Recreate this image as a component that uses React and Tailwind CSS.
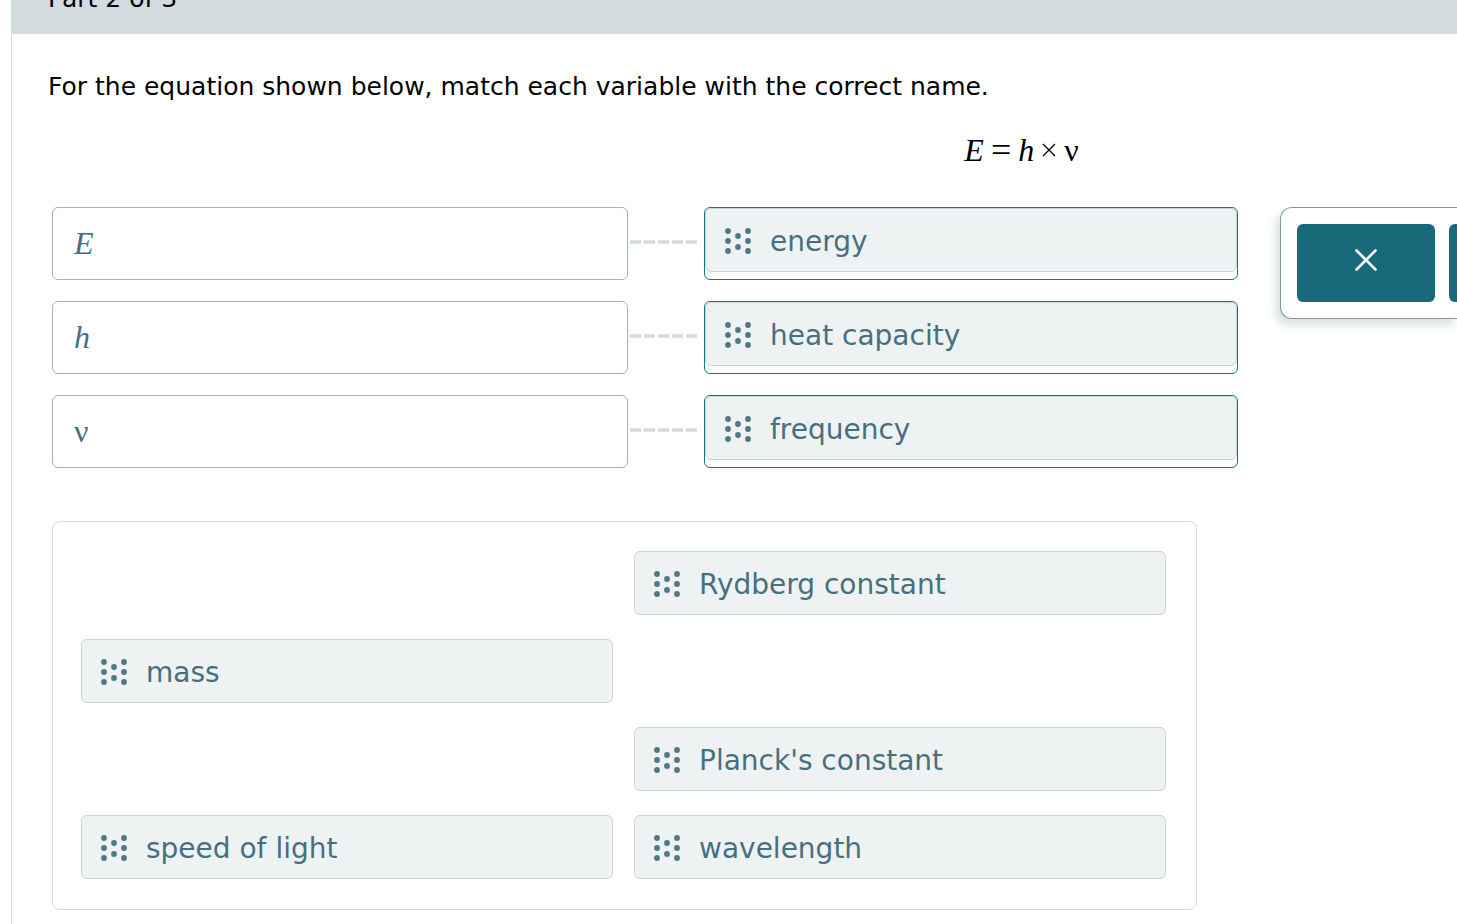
import React from 'react';

const matches = [
  { id: 'E', symbol: 'E', italic: true, answer: 'energy' },
  { id: 'h', symbol: 'h', italic: true, answer: 'heat capacity' },
  { id: 'v', symbol: 'ν', italic: false, answer: 'frequency' },
];

const bank = [
  { label: 'Rydberg constant', place: 'col-start-2 row-start-1' },
  { label: 'mass', place: 'col-start-1 row-start-2' },
  { label: "Planck's constant", place: 'col-start-2 row-start-3' },
  { label: 'speed of light', place: 'col-start-1 row-start-4' },
  { label: 'wavelength', place: 'col-start-2 row-start-4' },
];

const dots = [
  [4, 4], [4, 14], [4, 24],
  [14, 9], [14, 20],
  [24, 4], [24, 14], [24, 24],
];

function Grip() {
  return (
    <svg width="28" height="28" viewBox="0 0 28 28" fill="#4f7884" aria-hidden="true" className="shrink-0">
      {dots.map(([x, y]) => (
        <circle key={`${x}-${y}`} cx={x} cy={y} r="2.9" />
      ))}
    </svg>
  );
}

function Tile({ label, className }) {
  return (
    <button
      type="button"
      className={`flex h-16 w-full cursor-grab items-center gap-[18px] rounded-md border border-[#c6d3d7] bg-[#eef2f3] pt-0.5 pl-[18px] text-left text-[28px] leading-8 text-[#47707f] ${className}`}
    >
      <Grip />
      <span className="pt-0.5">{label}</span>
    </button>
  );
}

function MatchRow({ symbol, italic, answer }) {
  return (
    <li className="grid h-[73px] grid-cols-[576fr_76fr_534fr] items-stretch">
      <div
        className={`flex items-center rounded-md border border-[#a0b4bc] pb-0.5 pl-[21px] font-['Liberation_Serif',serif] text-[32px] leading-9 text-[#47707f] ${italic ? 'italic' : ''}`}
      >
        {symbol}
      </div>
      <div className="flex items-center pb-1 pl-0.5">
        <svg width="67" height="4" viewBox="0 0 67 4" aria-hidden="true">
          <path d="M0 2H67" stroke="#d2dbdd" strokeWidth="3.6" strokeDasharray="11 3" />
        </svg>
      </div>
      <div className="rounded-md border border-[#1a7388]">
        <Tile label={answer} className="" />
      </div>
    </li>
  );
}

export default function App() {
  return (
    <div className="min-h-screen overflow-x-hidden bg-white pl-[11px] font-['DejaVu_Sans',sans-serif] text-black">
      <main className="flex min-h-screen flex-col border-l border-[#d2dbdd]">
        <header className="-mt-8 -ml-px flex h-[66px] items-center bg-[#d2dbdd] pb-1 pl-[37px]">
          <h1 className="text-[25px] leading-8">Part 2 of 3</h1>
        </header>

        <div className="pt-[37px] pl-9">
          <p className="text-[25px] leading-8">
            For the equation shown below, match each variable with the correct name.
          </p>
          <p className="mt-[29px] flex items-center justify-center gap-[7px] pl-[538px] font-['Liberation_Serif',serif] text-[32px] leading-9">
            <i>E</i>
            <span className="text-[36px]">=</span>
            <i>h</i>
            <svg width="16" height="16" viewBox="0 0 16 16" stroke="currentColor" strokeWidth="1.3" role="img" aria-label="times">
              <path d="M2 2L14 14M14 2L2 14" />
            </svg>
            <span>ν</span>
          </p>
        </div>

        <div className="mt-[39px] flex items-start gap-[42px] pl-10">
          <ul className="flex flex-1 flex-col gap-[21px]">
            {matches.map((m) => (
              <MatchRow key={m.id} {...m} />
            ))}
          </ul>
          <div className="flex h-28 w-[177px] gap-3.5 rounded-l-xl border border-r-0 border-[#7f9ca6] bg-white py-4 pl-4 shadow-[-4px_6px_10px_#d5dfe1]">
            <button
              type="button"
              aria-label="Clear"
              className="flex w-[138px] shrink-0 items-center justify-center rounded-md bg-[#186a7b] pb-1.5"
            >
              <svg width="24" height="24" viewBox="0 0 24 24" stroke="white" strokeWidth="2.6" strokeLinecap="round" aria-hidden="true">
                <path d="M2.5 2.5L21.5 21.5M21.5 2.5L2.5 21.5" />
              </svg>
            </button>
            <button type="button" aria-label="Undo" className="flex-1 rounded-l-md bg-[#186a7b]" />
          </div>
        </div>

        <section
          aria-label="Answer choices"
          className="mt-[53px] mr-[260px] mb-3.5 ml-10 grid grid-cols-2 gap-x-[21px] gap-y-6 rounded-lg border border-[#d2dbdd] pt-[29px] pr-[30px] pb-[30px] pl-7"
        >
          {bank.map((b) => (
            <Tile key={b.label} label={b.label} className={b.place} />
          ))}
        </section>
      </main>
    </div>
  );
}
